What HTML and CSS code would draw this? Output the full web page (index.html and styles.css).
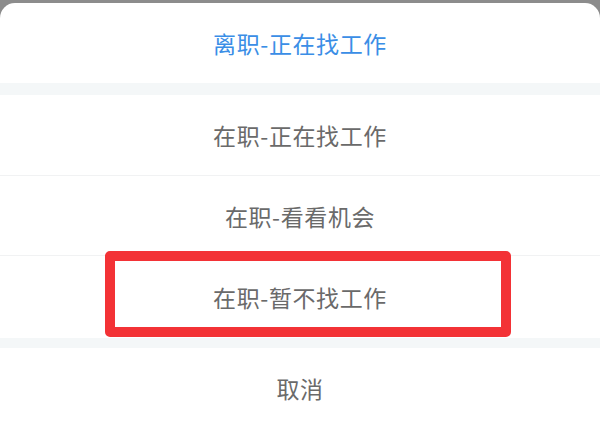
FILE: index.html
```html
<!DOCTYPE html>
<html lang="zh-CN">
<head>
<meta charset="utf-8">
<title>求职状态</title>
<link rel="stylesheet" href="styles.css">
</head>
<body>
<div class="sheet">
  <div class="row row-first active">离职-正在找工作</div>
  <div class="band band-top"></div>
  <div class="row row-2 divided">在职-正在找工作</div>
  <div class="row row-3 divided">在职-看看机会</div>
  <div class="row row-4">
    在职-暂不找工作
    <span class="highlight"></span>
  </div>
  <div class="band band-bottom"></div>
  <div class="row row-cancel">取消</div>
</div>
</body>
</html>
```
FILE: styles.css
```css
html, body {
  margin: 0;
  padding: 0;
}
body {
  background: #8c8c8c;
  min-height: 100vh;
  display: flex;
  flex-direction: column;
  font-family: "Noto Sans CJK SC", "Noto Sans", sans-serif;
}
.sheet {
  margin-top: 3px;
  flex: 1;
  background: #ffffff;
  border-radius: 15px 15px 0 0;
  display: flex;
  flex-direction: column;
  overflow: hidden;
}
.row {
  box-sizing: border-box;
  display: flex;
  align-items: center;
  justify-content: center;
  font-size: 23px;
  color: #6a6a6a;
  letter-spacing: 0.6px;
}
.row.active {
  color: #3a8ee6;
}
.row-first {
  height: 80px;
}
.band {
  background: #f4f7f8;
}
.band-top {
  height: 12px;
}
.band-bottom {
  height: 10px;
}
.divided {
  border-bottom: 1px solid #f1f2f3;
}
.row-2 {
  height: 81px;
}
.row-3 {
  height: 80px;
}
.row-4 {
  height: 82px;
  position: relative;
}
.row-cancel {
  height: 80px;
}
.highlight {
  position: absolute;
  left: 105px;
  top: -5px;
  width: 406px;
  height: 86px;
  box-sizing: border-box;
  border: 10px solid #f33236;
  border-radius: 5px;
}
```
